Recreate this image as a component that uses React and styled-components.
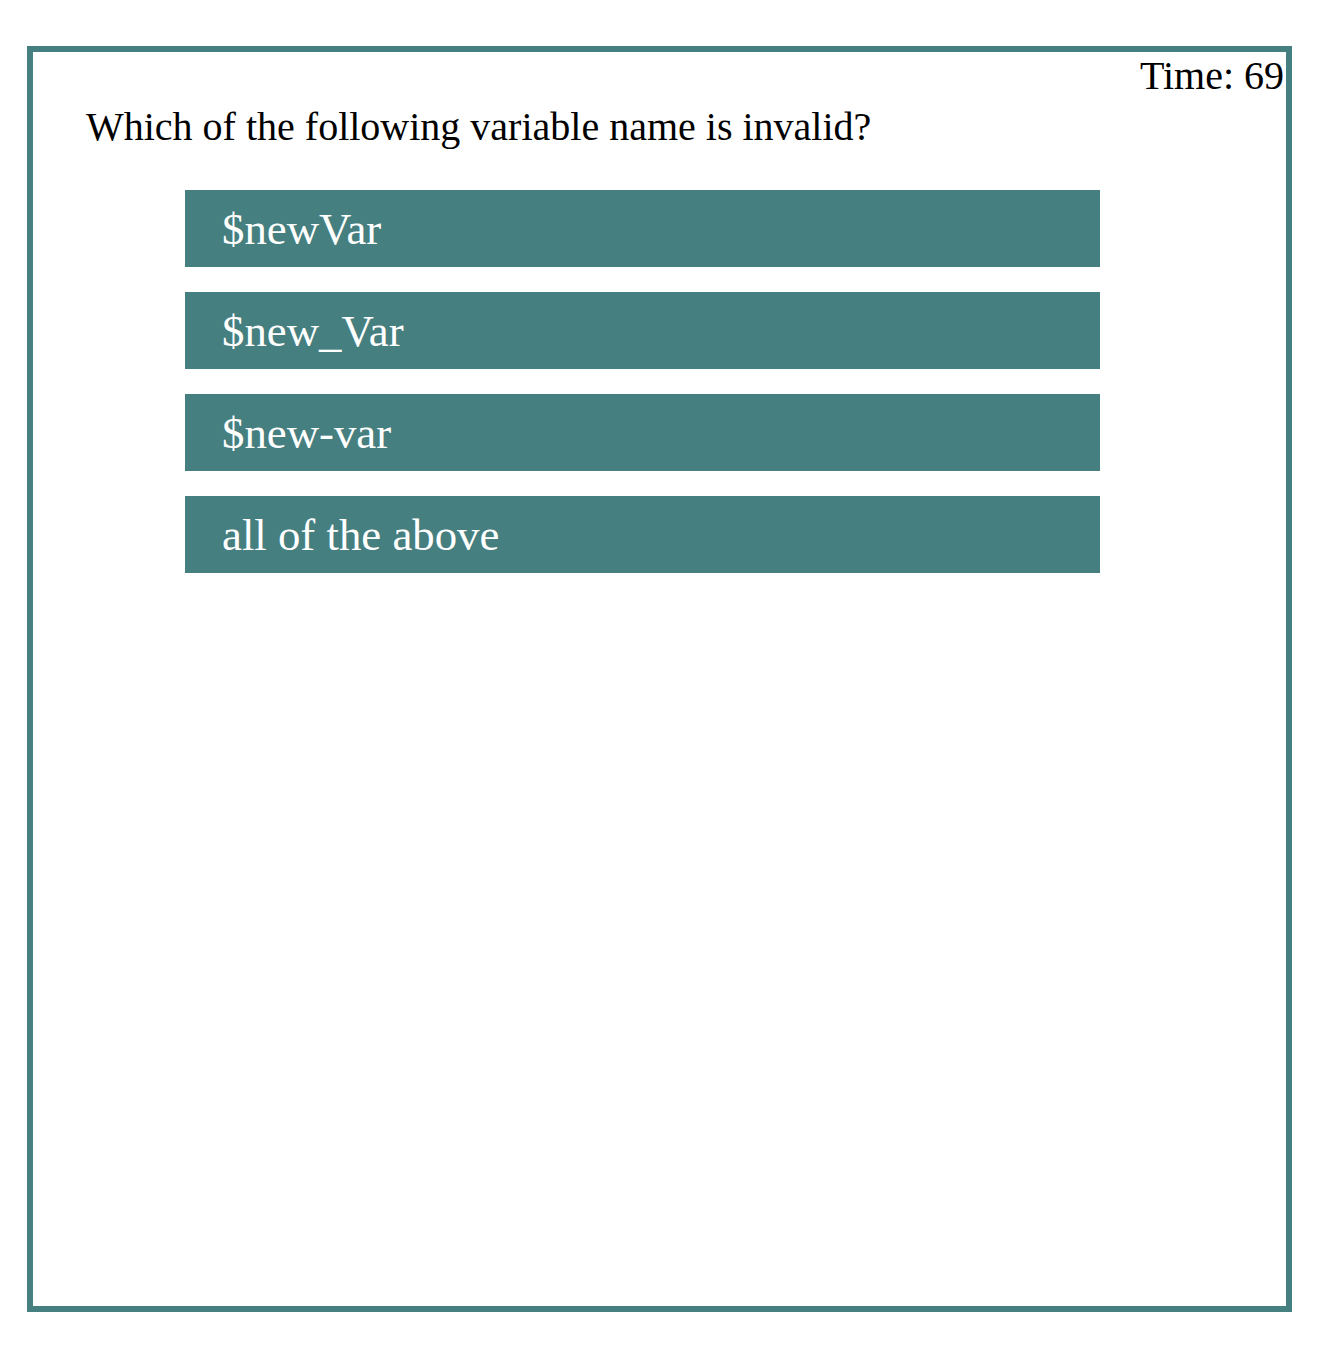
import React from 'react';
import styled, { createGlobalStyle } from 'styled-components';

const GlobalStyle = createGlobalStyle`
  body {
    margin: 8px;
    font-family: "Liberation Serif", "Times New Roman", serif;
    background: #fff;
  }
`;

const Frame = styled.div`
  position: relative;
  box-sizing: border-box;
  width: 1265px;
  height: 1266px;
  margin: 38px 0 0 19px;
  border: 6px solid #467f7f;
`;

const Timer = styled.div`
  position: absolute;
  top: 1px;
  right: 2px;
  font-size: 40px;
  line-height: 46px;
  color: #000;
`;

const Question = styled.p`
  margin: 0;
  padding: 52px 0 0 53px;
  font-size: 40px;
  line-height: 46px;
  color: #000;
`;

const Options = styled.div`
  display: flex;
  flex-direction: column;
  gap: 25px;
  margin: 40px 0 0 152px;
  width: 915px;
`;

const Option = styled.button`
  display: flex;
  align-items: center;
  box-sizing: border-box;
  height: 77px;
  padding: 0 0 0 37px;
  border: none;
  background: #467f7f;
  color: #fff;
  font-family: inherit;
  font-size: 44.8px;
  text-align: left;
  cursor: pointer;
`;

const answers = ['$newVar', '$new_Var', '$new-var', 'all of the above'];

export default function App() {
  return (
    <>
      <GlobalStyle />
      <Frame>
        <Timer>Time: 69</Timer>
        <Question>Which of the following variable name is invalid?</Question>
        <Options>
          {answers.map((a) => (
            <Option key={a}>{a}</Option>
          ))}
        </Options>
      </Frame>
    </>
  );
}
